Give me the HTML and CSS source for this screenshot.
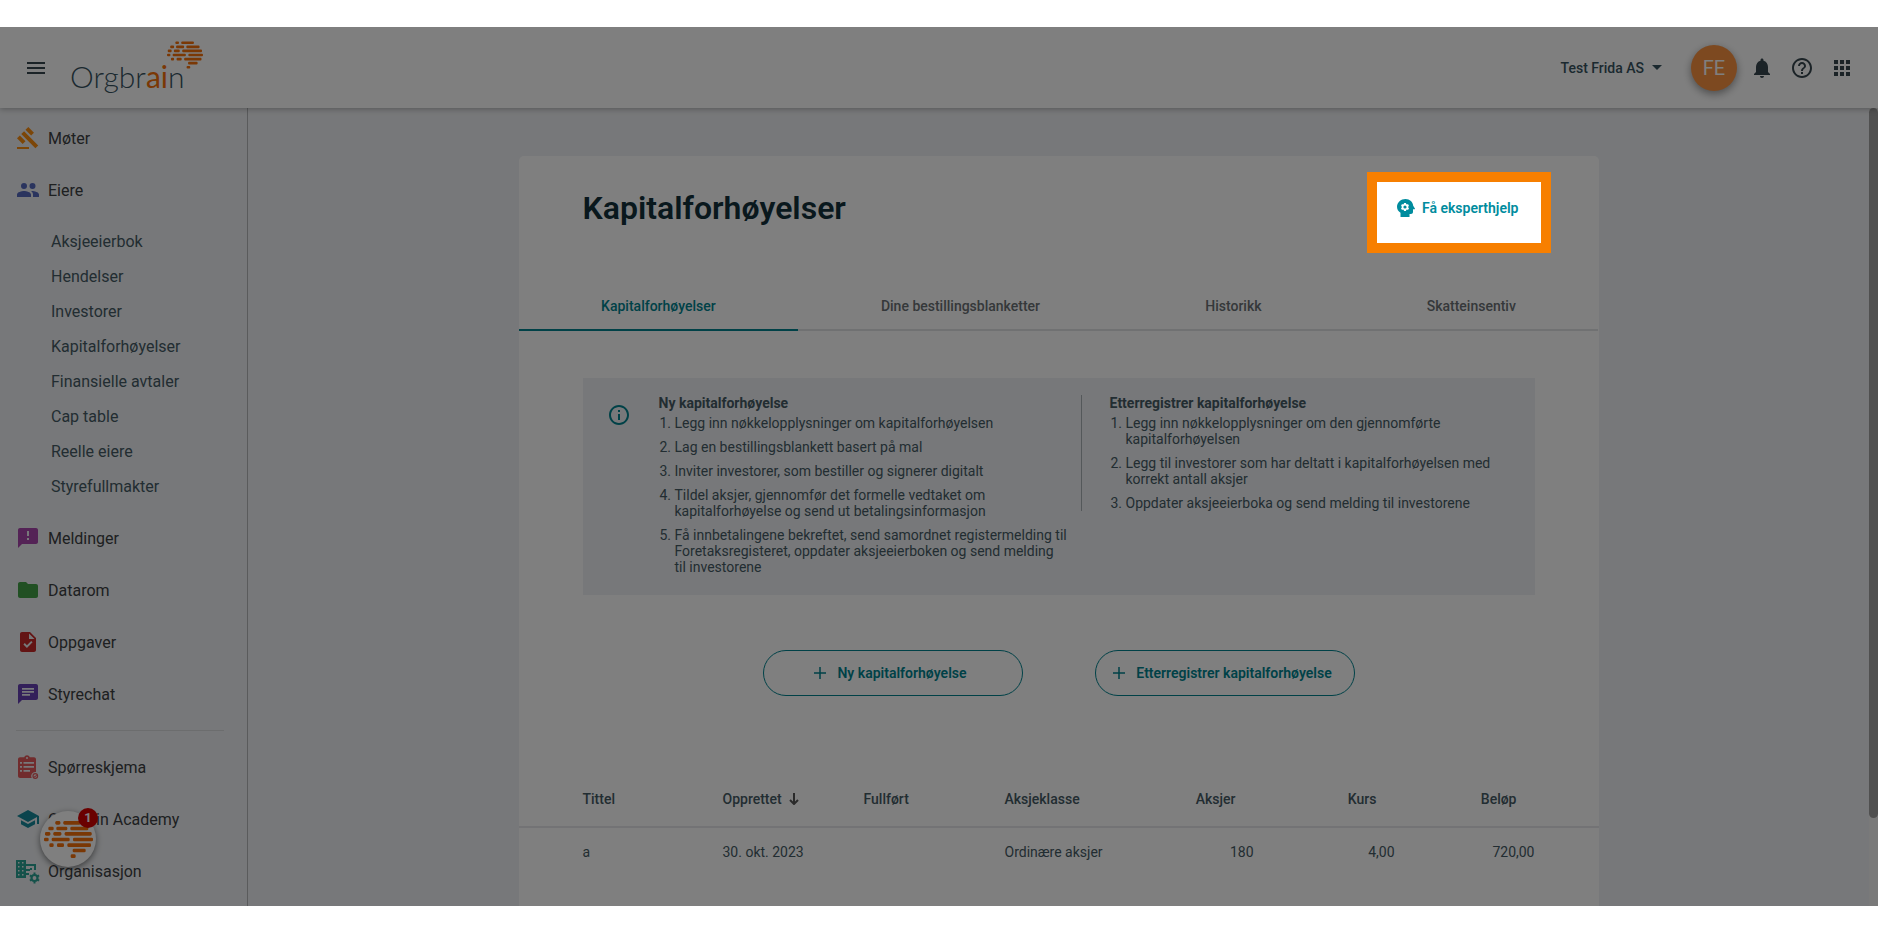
FILE: index.html
```html
<!DOCTYPE html>
<html lang="no">
<head>
<meta charset="utf-8">
<title>Orgbrain – Kapitalforhøyelser</title>
<link rel="stylesheet" href="styles.css">
</head>
<body>
<svg class="defs" aria-hidden="true">
  <symbol id="brain" viewBox="131 330 147 111">
    <g fill="#f5700a">
      <rect x="165" y="330" width="15" height="11" rx="4"/><rect x="189" y="330" width="52" height="11" rx="4"/>
      <rect x="144" y="347" width="16" height="11" rx="4"/><rect x="168" y="347" width="33" height="11" rx="4"/><rect x="210" y="347" width="54" height="11" rx="4"/>
      <rect x="134" y="363" width="16" height="11" rx="4"/><rect x="159" y="363" width="24" height="11" rx="4"/><rect x="193" y="363" width="81" height="11" rx="4"/>
      <rect x="131" y="380" width="14" height="11" rx="4"/><rect x="154" y="380" width="54" height="11" rx="4"/><rect x="218" y="380" width="60" height="11" rx="4"/>
      <rect x="147" y="397" width="13" height="11" rx="4"/><rect x="170" y="397" width="21" height="11" rx="4"/><rect x="201" y="397" width="71" height="11" rx="4"/>
      <rect x="217" y="413" width="39" height="11" rx="4"/>
      <rect x="211" y="430" width="15" height="11" rx="4"/>
    </g>
  </symbol>
</svg>

<div class="app">
  <header class="topbar">
    <button class="icon-btn" aria-label="Meny"><svg viewBox="0 0 24 24"><path d="M3 6h18v2H3zM3 11h18v2H3zM3 16h18v2H3z"/></svg></button>
    <a class="logo" href="#"><span class="logo-text">Orgbr<span class="logo-ai">ai</span>n</span><svg class="logo-brain"><use href="#brain"/></svg></a>
    <button class="company">Test Frida AS <svg viewBox="0 0 10 5"><path d="M0 0h10L5 5z"/></svg></button>
    <button class="avatar">FE</button>
    <nav class="tools">
      <button class="icon-btn" aria-label="Varsler"><svg viewBox="0 0 24 24"><path d="M12 22c1.1 0 2-.9 2-2h-4c0 1.1.89 2 2 2zm6-6v-5c0-3.07-1.64-5.64-4.5-6.32V4c0-.83-.67-1.5-1.5-1.5s-1.5.67-1.5 1.500v.68C7.630 5.360 6 7.920 6 11v5l-2 2v1h16v-1l-2-2z"/></svg></button>
      <button class="icon-btn" aria-label="Hjelp"><svg viewBox="0 0 24 24"><path d="M11 18h2v-2h-2v2zm1-16C6.480 2 2 6.480 2 12s4.480 10 10 10 10-4.480 10-10S17.520 2 12 2zm0 18c-4.410 0-8-3.590-8-8s3.590-8 8-8 8 3.590 8 8-3.590 8-8 8zm0-14c-2.210 0-4 1.790-4 4h2c0-1.100.9-2 2-2s2 .9 2 2c0 2-3 1.750-3 5h2c0-2.250 3-2.500 3-5 0-2.210-1.790-4-4-4z"/></svg></button>
      <button class="icon-btn" aria-label="Apper"><svg viewBox="0 0 24 24"><path d="M4 8h4V4H4v4zm6 12h4v-4h-4v4zm-6 0h4v-4H4v4zm0-6h4v-4H4v4zm6 0h4v-4h-4v4zm6-10v4h4V4h-4zm-6 4h4V4h-4v4zm6 6h4v-4h-4v4zm0 6h4v-4h-4v4z"/></svg></button>
    </nav>
  </header>

  <div class="body">
    <nav class="sidebar">
      <a class="item" href="#"><svg viewBox="0 0 24 24" fill="#f88c10"><path d="M1 21h12v2H1zM5.245 8.070l2.830-2.827 14.140 14.142-2.828 2.828zM12.317 1l5.657 5.656-2.830 2.830-5.654-5.660zM3.825 9.485l5.657 5.657-2.828 2.828-5.657-5.657z"/></svg>Møter</a>
      <a class="item" href="#"><svg viewBox="0 0 24 24" fill="#5468bd"><path d="M16.500 11a3 3 0 1 0 0-6 3 3 0 0 0 0 6zM8 11a3 3 0 1 0 0-6 3 3 0 0 0 0 6zm0 2c-2.330 0-7 1.170-7 3.500V19h14v-2.500C15 14.170 10.330 13 8 13zm8 0c-.29 0-.62.02-.97.05 1.160.84 1.970 1.970 1.970 3.450V19h6v-2.500c0-2.330-4.670-3.500-7-3.500z"/></svg>Eiere</a>
      <div class="sub">
        <a href="#">Aksjeeierbok</a>
        <a href="#">Hendelser</a>
        <a href="#">Investorer</a>
        <a href="#">Kapitalforhøyelser</a>
        <a href="#">Finansielle avtaler</a>
        <a href="#">Cap table</a>
        <a href="#">Reelle eiere</a>
        <a href="#">Styrefullmakter</a>
      </div>
      <a class="item" href="#"><svg viewBox="0 0 24 24" fill="#a846ac"><path d="M20 2H4c-1.100 0-2 .9-2 2v18l4-4h14c1.100 0 2-.9 2-2V4c0-1.100-.9-2-2-2zm-7 12h-2v-2h2v2zm0-4h-2V5h2v5z"/></svg>Meldinger</a>
      <a class="item" href="#"><svg viewBox="0 0 24 24" fill="#43a047"><path d="M10 4H4c-1.100 0-2 .9-2 2v12c0 1.100.9 2 2 2h16c1.100 0 2-.9 2-2V8c0-1.100-.9-2-2-2h-8l-2-2z"/></svg>Datarom</a>
      <a class="item" href="#"><svg viewBox="0 0 24 24" fill="#c62828"><path d="M14 2H6c-1.100 0-2 .9-2 2v16c0 1.100.9 2 2 2h12c1.100 0 2-.9 2-2V8l-6-6zm-3.060 16L7.400 14.460l1.410-1.410 2.120 2.120 4.240-4.240 1.410 1.410L10.940 18zM13 9V3.500L18.500 9H13z"/></svg>Oppgaver</a>
      <a class="item" href="#"><svg viewBox="0 0 24 24" fill="#6740b4"><path d="M20 2H4c-1.100 0-2 .9-2 2v18l4-4h14c1.100 0 2-.9 2-2V4c0-1.100-.9-2-2-2zM6 6h12v1.700H6zm0 3h12v1.700H6zm8 4.700H6V12h8z"/></svg>Styrechat</a>
      <hr class="rule">
      <a class="item" href="#"><svg viewBox="0 0 24 24" fill="#e2595a"><path fill-rule="evenodd" d="M4 2.200h4.200C8.600 1 9.700.2 11 .2s2.400.8 2.800 2H18c1.100 0 2 .9 2 2V17a4 4 0 0 0-4.200 6H4c-1.100 0-2-.9-2-2V4.200c0-1.100.9-2 2-2zM11 2a1 1 0 1 0 0 2 1 1 0 0 0 0-2zM4 7v1.800h2V7zm3.500 0v1.800H18V7zM4 11v1.800h2V11zm3.500 0v1.800H18V11zM4 15v1.800h2V15zm3.500 0v1.800H14V15z"/><circle cx="19.300" cy="21" r="2.300" fill="none" stroke="#e2595a" stroke-width="1.200"/><path d="M18 21.500l2.600-1.600.5.9-2.700 1.700z"/></svg>Spørreskjema</a>
      <a class="item" href="#"><svg viewBox="0 0 24 24" fill="#17899b"><path d="M5 13.180v4L12 21l7-3.820v-4L12 17l-7-3.820zM12 3L1 9l11 6 9-4.910V17h2V9L12 3z"/></svg>Orgbrain Academy</a>
      <a class="item" href="#"><svg viewBox="0 0 24 24" fill="#2ba395"><path fill-rule="evenodd" d="M0 1h10v4h10v6h-2V7h-8v3h4v2h-4v2h3v2h-3v3H0zm2 2v1.500h1.500V3zm4 0v1.500h1.500V3zM2 7v1.500h1.500V7zm4 0v1.500h1.500V7zm-4 4v1.500h1.500V11zm4 0v1.500h1.500V11zm-4 4v1.500h1.500V15zm4 0v1.500h1.500V15zM14 9h2v2h-2z"/><circle cx="18.500" cy="19" r="3" fill="none" stroke="#2ba395" stroke-width="2.200"/><path d="M17.500 13.600h2v2h-2zM17.500 22.400h2v2h-2zM13.400 17.200l1-1.700 1.700 1-1 1.700zM20.900 21.500l1-1.700 1.700 1-1 1.700zM13.400 20.800l1.700-1 1 1.700-1.700 1zM20.900 16.500l1.700-1 1 1.700-1.700 1z"/></svg>Organisasjon</a>
    </nav>

    <main class="main">
      <section class="card">
        <div class="card-head">
          <h1>Kapitalforhøyelser</h1>
          <button class="expert">
            <svg viewBox="0 0 24 24"><path fill-rule="evenodd" d="M12.500 3C16.800 3 20 6 20.200 9.800l1.700 2.600c.25.4 0 .9-.5.9H20v2.700c0 1.100-.9 2-2 2h-1.500v3H7.500v-4.200C5.200 15.400 4 13.200 4 10.800 4 6.400 7.900 3 12.500 3zM11 7l-.2 1-.8.5-1-.4-1 1.800.8.700v.9l-.8.700 1 1.800 1-.4.8.5.2 1h2l.2-1 .8-.5 1 .4 1-1.800-.8-.7v-.9l.8-.7-1-1.800-1 .4-.8-.5-.2-1z"/><circle cx="12" cy="11" r="1.600"/></svg>
            Få eksperthjelp
            <span class="spotlight"></span>
          </button>
        </div>

        <div class="tabs" role="tablist">
          <button class="tab active" role="tab" aria-selected="true">Kapitalforhøyelser</button>
          <button class="tab" role="tab">Dine bestillingsblanketter</button>
          <button class="tab" role="tab">Historikk</button>
          <button class="tab" role="tab">Skatteinsentiv</button>
        </div>

        <div class="info">
          <svg class="info-icon" viewBox="0 0 24 24"><path d="M11 7h2v2h-2zm0 4h2v6h-2zm1-9C6.480 2 2 6.480 2 12s4.480 10 10 10 10-4.480 10-10S17.520 2 12 2zm0 18c-4.410 0-8-3.590-8-8s3.590-8 8-8 8 3.590 8 8-3.590 8-8 8z"/></svg>
          <div class="info-col">
            <h2>Ny kapitalforhøyelse</h2>
            <ol>
              <li>Legg inn nøkkelopplysninger om kapitalforhøyelsen</li>
              <li>Lag en bestillingsblankett basert på mal</li>
              <li>Inviter investorer, som bestiller og signerer digitalt</li>
              <li>Tildel aksjer, gjennomfør det formelle vedtaket om kapitalforhøyelse og send ut betalingsinformasjon</li>
              <li>Få innbetalingene bekreftet, send samordnet registermelding til Foretaksregisteret, oppdater aksjeeierboken og send melding til investorene</li>
            </ol>
          </div>
          <div class="info-col second">
            <h2>Etterregistrer kapitalforhøyelse</h2>
            <ol>
              <li>Legg inn nøkkelopplysninger om den gjennomførte kapitalforhøyelsen</li>
              <li>Legg til investorer som har deltatt i kapitalforhøyelsen med korrekt antall aksjer</li>
              <li>Oppdater aksjeeierboka og send melding til investorene</li>
            </ol>
          </div>
        </div>

        <div class="actions">
          <button class="pill"><svg viewBox="0 0 12 12"><path d="M6 0v12M0 6h12"/></svg>Ny kapitalforhøyelse</button>
          <button class="pill"><svg viewBox="0 0 12 12"><path d="M6 0v12M0 6h12"/></svg>Etterregistrer kapitalforhøyelse</button>
        </div>

        <table class="grid">
          <colgroup><col class="c-first"><col class="c"><col class="c"><col><col class="c"><col class="c"><col class="c-last"></colgroup>
          <thead>
            <tr><th>Tittel</th><th>Opprettet <svg class="sort" viewBox="0 0 10 12"><path d="M5 0v11M1 7l4 4 4-4"/></svg></th><th>Fullført</th><th>Aksjeklasse</th><th class="num">Aksjer</th><th class="num">Kurs</th><th class="num">Beløp</th></tr>
          </thead>
          <tbody>
            <tr><td>a</td><td>30. okt. 2023</td><td></td><td>Ordinære aksjer</td><td class="num">180</td><td class="num">4,00</td><td class="num">720,00</td></tr>
          </tbody>
        </table>
      </section>
    </main>
    <div class="scrollbar"><div class="thumb"></div></div>
  </div>

  <button class="fab" aria-label="Orgbrain"><svg><use href="#brain"/></svg><span class="badge">1</span></button>
</div>
</body>
</html>
```

FILE: styles.css
```css
* { box-sizing: border-box; }

body {
  margin: 0;
  height: 100vh;
  padding: 27px 0;
  display: flex;
  background: #fff;
  font-family: Roboto, "Liberation Sans", sans-serif;
  font-size: 14px;
  color: #455a64;
}

button {
  margin: 0;
  padding: 0;
  border: 0;
  background: none;
  font: inherit;
  color: inherit;
}

a { color: inherit; text-decoration: none; }

.defs { position: absolute; width: 0; height: 0; }

.app {
  position: relative;
  flex: 1;
  min-width: 0;
  display: flex;
  flex-direction: column;
  overflow: hidden;
  background: #eff1f4;
}

/* Top bar */
.topbar {
  position: relative;
  z-index: 1;
  flex: none;
  height: 81px;
  padding: 0 24px;
  display: flex;
  align-items: center;
  background: #fff;
  box-shadow: 0 1px 6px rgba(0, 0, 0, 0.3);
}

.icon-btn { width: 24px; height: 24px; fill: #37474f; }
.icon-btn svg { display: block; width: 24px; height: 24px; }

.logo {
  display: flex;
  align-items: flex-start;
  margin-left: 22px;
  margin-right: auto;
  height: 54px;
}

.logo-text {
  align-self: flex-end;
  font: 300 30px/38px Lato, sans-serif;
  color: #37535f;
}

.logo-ai { color: #f5700a; font-weight: 400; }

.logo-brain { width: 36px; height: 28px; margin-left: -18px; }

.company {
  display: flex;
  align-items: center;
  gap: 8px;
  font-weight: 500;
  color: #37535f;
}

.company svg { width: 10px; height: 5px; fill: #37535f; }

.avatar {
  width: 46px;
  height: 46px;
  margin: 0 13px 0 29px;
  border-radius: 50%;
  background: #fb9240;
  box-shadow: 0 3px 8px rgba(0, 0, 0, 0.4);
  font-size: 20px;
  font-weight: 400;
  color: #fff;
}

.tools { display: flex; gap: 16px; }

/* Page body */
.body { flex: 1; min-height: 0; display: flex; }

.sidebar {
  flex: none;
  width: 248px;
  padding-top: 4px;
  border-right: 1px solid #b4b6b9;
}

.item {
  height: 52px;
  padding-left: 16px;
  display: flex;
  align-items: center;
  gap: 8px;
  font-size: 16px;
  color: #3c4043;
}

.item svg { width: 24px; height: 24px; overflow: visible; }

.sub { padding: 8px 0; }

.sub a {
  display: block;
  padding-left: 51px;
  font-size: 16px;
  line-height: 35px;
}

.rule {
  height: 1px;
  margin: 10px 23px 10px 16px;
  border: 0;
  background: #d8dadd;
}

.main { flex: 1; display: flex; justify-content: center; padding-top: 48px; }

.card {
  width: 100%;
  max-width: 1080px;
  padding-top: 32px;
  border-radius: 5px 5px 0 0;
  background: #fff;
}

.card-head {
  display: flex;
  justify-content: space-between;
  align-items: center;
  margin: 0 64px 54px;
}

h1 { margin: 0; font-size: 32px; line-height: 40px; font-weight: 600; color: #12303b; }

.expert {
  position: relative;
  height: 36px;
  padding: 0 16px;
  display: flex;
  align-items: center;
  gap: 5px;
  font-weight: 600;
  color: #008c9e;
}

.expert svg { width: 24px; height: 24px; fill: #008c9e; }

/* Frame round the highlighted button; its shadow dims the rest of the app */
.spotlight {
  position: absolute;
  z-index: 10;
  inset: -18px -16px -27px -10px;
  border: 10px solid #f77f00;
  box-shadow: 0 0 0 4000px rgba(0, 0, 0, 0.5);
}

.tabs { display: flex; }

.tab {
  flex: 1 1 auto;
  height: 49px;
  border-bottom: 2px solid #e0e2e5;
  font-weight: 500;
  color: #6b7175;
}

.tab.active { border-color: #00838f; color: #00838f; }

.info {
  display: flex;
  align-items: flex-start;
  margin: 47px 64px 0;
  padding: 17px 16px 20px 24px;
  background: #eff1f4;
  line-height: 16px;
}

.info-icon { flex: none; width: 24px; height: 24px; margin: 8px 28px 0 0; fill: #00838f; }

.info-col { flex: 1 1 0; padding-right: 13px; }

.info-col.second { padding: 0 0 0 28px; border-left: 1px solid #a9b0b5; }

.info h2 { margin: 0 0 4px; font-size: 14px; line-height: 16px; font-weight: 700; }

.info ol {
  margin: 0;
  padding-left: 16px;
  display: flex;
  flex-direction: column;
  gap: 8px;
}

.actions { display: flex; justify-content: center; gap: 72px; margin: 55px 0 76px; }

.pill {
  width: 260px;
  height: 46px;
  padding-right: 4px;
  display: flex;
  justify-content: center;
  align-items: center;
  gap: 11px;
  border: 1px solid #00838f;
  border-radius: 23px;
  font-weight: 600;
  color: #00838f;
}

.pill svg { width: 12px; height: 12px; fill: none; stroke: #00838f; stroke-width: 1.5; }

.grid { width: 100%; table-layout: fixed; border-collapse: collapse; text-align: left; }

.c { width: 141px; }
.c-first, .c-last { width: 204px; }

.grid th, .grid td { padding: 0; }
.grid th { height: 55px; border-bottom: 2px solid #e6e7ea; font-weight: 500; }
.grid td { height: 48px; }
.grid th:first-child, .grid td:first-child { padding-left: 64px; }
.grid .num { text-align: right; }
.grid th.num { padding-right: 18px; }
.grid td.num:last-child { padding-right: 64px; }
.grid th.num:last-child { padding-right: 82px; }

.sort { width: 10px; height: 12px; margin-left: 4px; vertical-align: -1px; fill: none; stroke: #555; stroke-width: 2; }

.scrollbar { flex: none; width: 9px; background: #f4f4f4; }
.thumb { height: 89%; border-radius: 5px; background: #a0a0a0; }

/* Floating assistant */
.fab {
  position: absolute;
  left: 40px;
  bottom: 39px;
  width: 56px;
  height: 56px;
  display: flex;
  align-items: center;
  justify-content: center;
  border-radius: 50%;
  background: #fff;
  box-shadow: 0 2px 6px rgba(0, 0, 0, 0.5);
}

.fab svg { width: 49px; height: 37px; }

.badge {
  position: absolute;
  top: -3px;
  right: -2px;
  width: 20px;
  height: 20px;
  border-radius: 50%;
  background: #d50000;
  font-size: 13px;
  line-height: 20px;
  font-weight: 700;
  color: #fff;
}
```
